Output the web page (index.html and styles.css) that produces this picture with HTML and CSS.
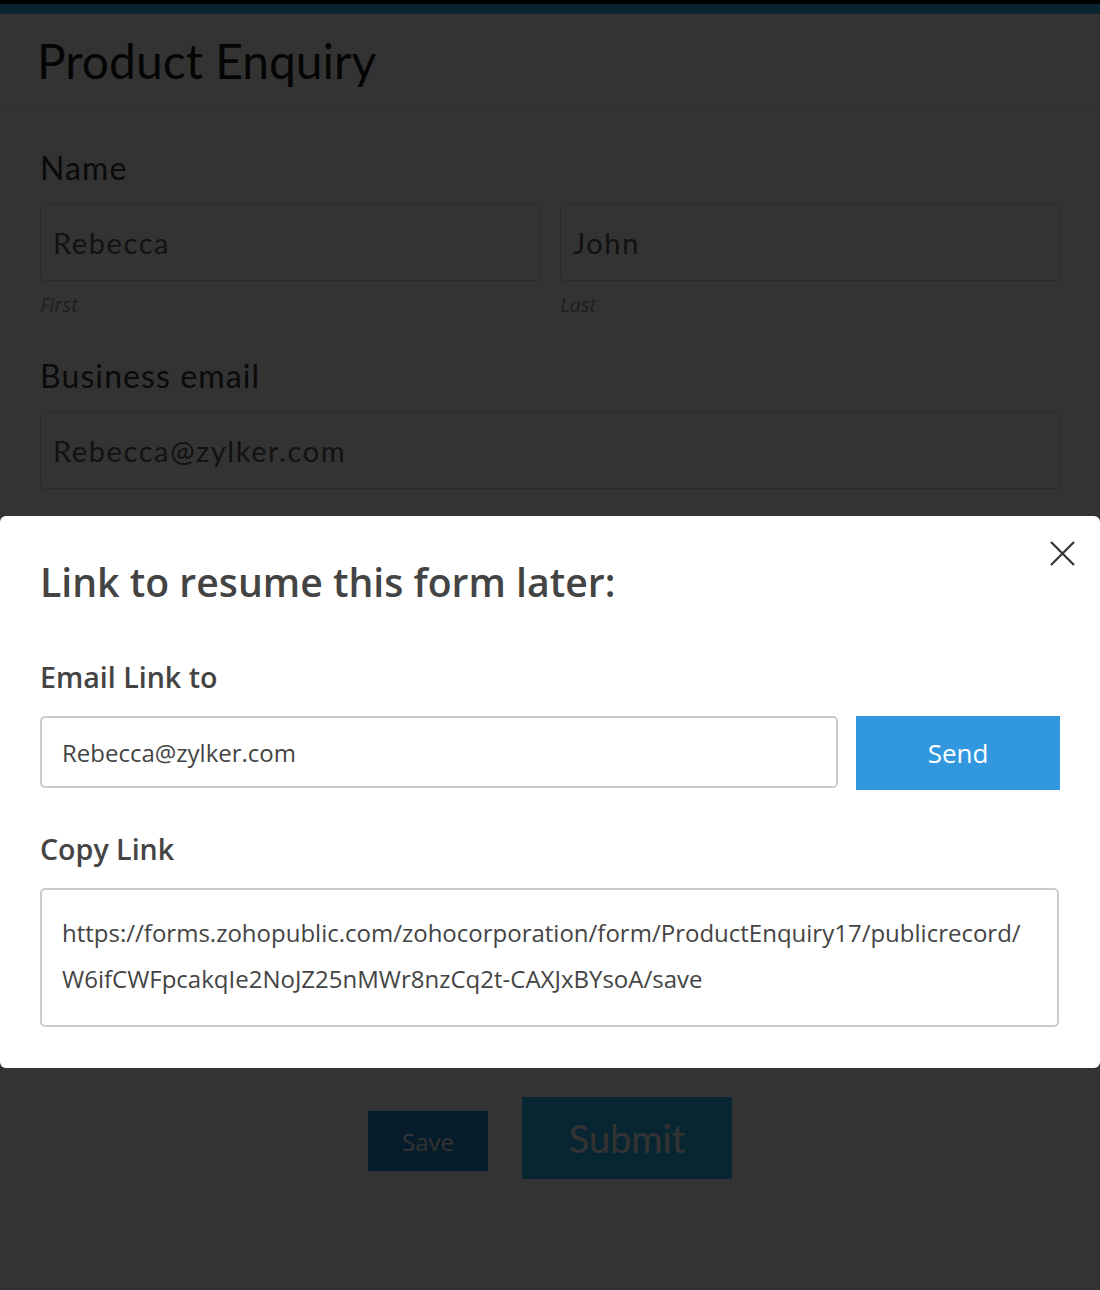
FILE: index.html
```html
<!DOCTYPE html>
<html lang="en">
<head>
<meta charset="utf-8">
<title>Product Enquiry</title>
<link rel="stylesheet" href="styles.css">
</head>
<body>
<div class="page">
  <div class="topline"></div>
  <div class="brandbar"></div>
  <header class="form-header">
    <h1 class="form-title">Product Enquiry</h1>
  </header>
  <main class="form-body">
    <div class="field">
      <div class="field-label">Name</div>
      <div class="name-row">
        <div class="name-col">
          <div class="text-input">Rebecca</div>
          <div class="sub-label">First</div>
        </div>
        <div class="name-col">
          <div class="text-input">John</div>
          <div class="sub-label">Last</div>
        </div>
      </div>
    </div>
    <div class="field">
      <div class="field-label">Business email</div>
      <div class="text-input">Rebecca@zylker.com</div>
    </div>
    <div class="actions">
      <button class="btn-save">Save</button>
      <button class="btn-submit">Submit</button>
    </div>
  </main>
</div>

<div class="overlay"></div>

<div class="modal">
  <button class="modal-close" aria-label="Close">
    <svg width="25" height="25" viewBox="0 0 25 25"><path d="M1 1 L24 24 M24 1 L1 24" stroke="#333" stroke-width="2.2" fill="none"/></svg>
  </button>
  <h2 class="modal-title">Link to resume this form later:</h2>
  <div class="modal-label">Email Link to</div>
  <div class="email-row">
    <div class="modal-input">Rebecca@zylker.com</div>
    <button class="btn-send">Send</button>
  </div>
  <div class="modal-label copy-label">Copy Link</div>
  <div class="link-box">https://forms.zohopublic.com/zohocorporation/form/ProductEnquiry17/publicrecord/<br>W6ifCWFpcakqIe2NoJZ25nMWr8nzCq2t-CAXJxBYsoA/save</div>
</div>
</body>
</html>
```

FILE: styles.css
```css
* { box-sizing: border-box; }

html, body {
  margin: 0;
  padding: 0;
}

body {
  background: #ffffff;
  font-family: "Lato", "Open Sans", sans-serif;
  height: 1290px;
  overflow: hidden;
}

.topline {
  height: 4px;
  background: #000;
}

.brandbar {
  height: 10px;
  background: #28b9f0;
}

.form-header {
  height: 95px;
  display: flex;
  align-items: center;
  padding-left: 37px;
  border-bottom: 1px solid #f2f2f2;
}

.form-title {
  margin: 0;
  font-family: "Lato", sans-serif;
  font-weight: 400;
  font-size: 48px;
  line-height: 1.2;
  color: #1a1a1a;
}

.form-body {
  padding: 0 40px;
}

.field {
  margin-top: 40px;
}

.field-label {
  font-size: 32px;
  line-height: 38px;
  color: #333;
  margin-bottom: 16px;
  letter-spacing: 1.1px;
}

.name-row {
  display: grid;
  grid-template-columns: 1fr 1fr;
  gap: 20px;
}

.text-input {
  height: 78px;
  border: 1px solid #d8d8d8;
  border-radius: 3px;
  padding-left: 12px;
  display: flex;
  align-items: center;
  font-size: 29px;
  letter-spacing: 1.6px;
  color: #5a5a5a;
  background: #fff;
}

.sub-label {
  margin-top: 12px;
  font-family: "Open Sans", sans-serif;
  font-style: italic;
  font-size: 20px;
  line-height: 24px;
  color: #9a9a9a;
}

.actions {
  margin-top: 608px;
  display: flex;
  justify-content: center;
  align-items: flex-start;
  gap: 34px;
}

.btn-save {
  margin-top: 14px;
  width: 120px;
  height: 60px;
  border: 0;
  background: #1e8cd2;
  color: #fff;
  font-family: "Open Sans", sans-serif;
  font-size: 24px;
  padding: 0;
}

.btn-submit {
  width: 210px;
  height: 82px;
  border: 0;
  background: #28bef5;
  color: #fff;
  font-family: "Lato", sans-serif;
  font-size: 38px;
  padding: 0;
}

.overlay {
  position: fixed;
  inset: 0;
  background: rgba(0, 0, 0, 0.8);
}

.modal {
  position: fixed;
  top: 516px;
  left: 0;
  width: 1100px;
  height: 552px;
  background: #fff;
  border-radius: 6px;
  padding: 42px 40px 0 40px;
  font-family: "Open Sans", sans-serif;
  color: #444;
}

.modal-close {
  position: absolute;
  top: 25px;
  right: 25px;
  width: 25px;
  height: 25px;
  padding: 0;
  border: 0;
  background: none;
  display: block;
}

.modal-close svg { display: block; }

.modal-title {
  margin: 0;
  font-size: 39.2px;
  font-weight: 600;
  line-height: 48px;
  color: #444;
}

.modal-label {
  margin-top: 54px;
  font-size: 28.6px;
  font-weight: 600;
  line-height: 34px;
  color: #444;
}

.email-row {
  margin-top: 22px;
  display: flex;
  align-items: flex-start;
  gap: 18px;
}

.modal-input {
  flex: 1;
  height: 72px;
  border: 2px solid #ccc;
  border-radius: 5px;
  padding-left: 20px;
  display: flex;
  align-items: center;
  font-size: 24px;
  color: #444;
}

.btn-send {
  width: 204px;
  height: 74px;
  border: 0;
  padding: 0;
  background: #3198e0;
  color: #fff;
  font-family: "Open Sans", sans-serif;
  font-size: 26px;
}

.copy-label {
  margin-top: 42px;
}

.link-box {
  margin-top: 22px;
  width: 1019px;
  border: 2px solid #ccc;
  border-radius: 5px;
  padding: 20px 20px 23px 20px;
  font-size: 24px;
  line-height: 46px;
  color: #444;
}
```
